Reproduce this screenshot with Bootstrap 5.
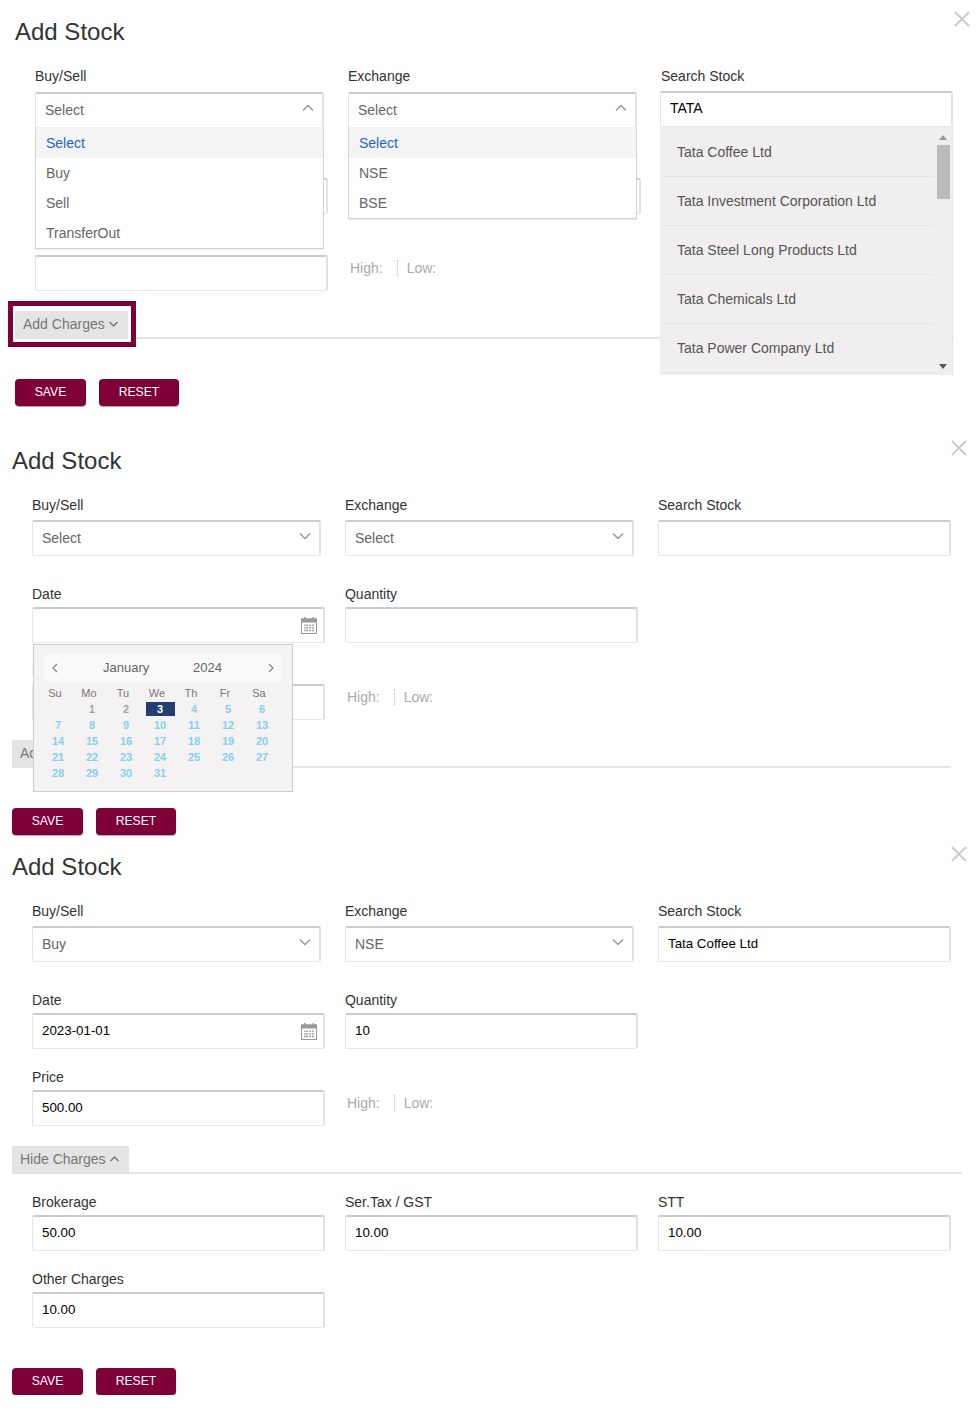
<!DOCTYPE html>
<html lang="en">
<head>
<meta charset="utf-8">
<title>Add Stock</title>
<link href="https://cdn.jsdelivr.net/npm/bootstrap@5.3.0/dist/css/bootstrap.min.css" rel="stylesheet">
<style>
body{background:#fff;font-family:"Liberation Sans",Arial,sans-serif;font-size:14px;color:#333;line-height:20px}
.sheet{position:relative;padding-left:12px}
.sheet-a{padding-left:15px;margin-top:17px}
.sheet-b{margin-top:40px}
.sheet-c{margin-top:17px}
.stock-title{font-size:24px;line-height:29px;font-weight:400;color:#333;margin:0 0 20px}
.close-x{position:absolute;top:-6px;right:11px;width:16px;height:16px;display:block}
.sheet-a .close-x{top:-6px;right:8px}
.stock-row{--bs-gutter-x:20px;--bs-gutter-y:0;margin-left:10px;margin-right:0;width:939px}
.gap-one{margin-bottom:28px}
.gap-two{margin-bottom:18px}
.gap-three{margin-bottom:20px}
.stock-label{display:block;font-size:14px;line-height:20px;color:#333;margin:0 0 3px}
.gap-one .stock-label{margin-bottom:5px}
.stock-input{height:36px;width:293px;padding:0 9px 2px;font-size:13.33px;color:#000;background:#fff;border:1px solid #e4e4e4;border-top:2px solid #ccc;border-right:2px solid #e2e2e2;border-bottom-color:#e8e8e8;border-radius:2px;box-shadow:none}
.stock-input.big-text{font-size:14px;padding-bottom:3px}
.pick{position:relative;height:36px;width:289px;display:flex;align-items:center;padding:0 0 2px 9px;font-size:14px;color:#666;background:#fff;border:1px solid #e4e4e4;border-top:2px solid #ccc;border-right:2px solid #e2e2e2;border-bottom-color:#e8e8e8;border-radius:2px}
.pick svg{position:absolute;right:8px;top:10px}
.pick-open{top:1px;z-index:6;border-bottom-color:#eee}
.pick-menu{position:absolute;top:33px;left:-1px;right:-2px;background:#fff;border:1px solid #d4d4d4;border-top:1px solid #eee;box-shadow:0 1px 1px #eee}
.pick-item{height:30px;line-height:30px;padding-left:10px;color:#666}
.pick-item.is-current{background:#f4f4f4;color:#1b66c9}
.search-box{position:relative;margin-left:-1px;width:293px}
.search-list{position:absolute;left:0;top:36px;width:293px;height:248px;z-index:5;background:#f0eeef;display:flex;border-right:1px solid #e4e4e4}
.search-items{width:275px;padding-top:1px}
.search-item{height:49px;line-height:49px;padding-left:17px;color:#555;border-bottom:1px solid #e6e4e5}
.search-rail{flex:1;display:flex;flex-direction:column;align-items:center;padding:8px 0 6px}
.rail-up{width:0;height:0;border:4px solid transparent;border-top:0;border-bottom:5px solid #999}
.rail-thumb{width:13px;height:54px;background:#bbb;margin-top:5px}
.rail-down{width:0;height:0;border:4px solid transparent;border-bottom:0;border-top:5px solid #555;margin-top:auto}
.date-box{position:relative;width:293px}
.cal-icon{position:absolute;right:8px;top:10px}
.quote{display:flex;align-items:center;padding:26px 0 0 2px;color:#aaa;line-height:20px}
.quote-sep{width:0;height:16px;border-left:1px dotted #bbb;margin:0 9px 0 14px}
.tab-line{display:flex;height:28px;border-bottom:2px solid #e5e5e5;margin-bottom:18px}
.sheet-a .tab-line,.sheet-b .tab-line{margin-bottom:0;width:939px}
.sheet-c .tab-line{width:950px}
.tab-btn{height:28px;display:flex;align-items:center;gap:4px;padding:0 10px 3px 8px;background:#e4e4e4;color:#777;font-size:14px;flex:none}
.mark-ring{position:relative;z-index:1;align-self:flex-start;margin:-10px -8px -8px -7px;padding:5px 3px 3px 2px;border:5px solid #7f0037;background:#fff}
.act-row{display:flex;gap:13px;margin-top:40px}
.act-btn{height:27px;padding:0;border:0;border-radius:4px;background:#7f0037;color:#fff;font-size:12.2px;line-height:25px;box-shadow:0 1px 1px rgba(0,0,0,.35)}
.act-btn:hover{background:#7f0037;color:#fff}
.act-save{width:71px}
.act-reset{width:80px}
.cal-pop{position:absolute;left:1px;top:37px;width:260px;height:148px;z-index:5;background:#f4f2f2;border:1px solid #ccc;padding:10px}
.cal-head{height:26px;background:#faf9f9;display:flex;align-items:center;font-size:13px;color:#666}
.cal-head svg{flex:none}
.cal-prev{margin-left:7px}
.cal-next{margin-left:auto;margin-right:7px}
.cal-month{margin-left:45px;width:90px}
.cal-grid{margin:4px 0 0 -3px;width:238px;table-layout:fixed;border-collapse:collapse;font-size:11px;line-height:16px;text-align:center}
.cal-grid th{font-weight:400;color:#777;padding:0 6px 0 0;height:16px}
.cal-grid td{padding:0;height:16px;font-weight:700;color:#84cfee}
.cal-grid td.was{color:#a5a5a5}
.cal-today{display:block;width:29px;height:14px;line-height:14px;margin:0 auto;background:#243f6f;color:#fff}
</style>
</head>
<body>

<!-- Panel 1 -->
<section class="sheet sheet-a">
  <svg class="close-x" viewBox="0 0 16 16"><path d="M1 1 15 15M15 1 1 15" stroke="#ccc" stroke-width="2" fill="none"/></svg>
  <h2 class="stock-title">Add Stock</h2>
  <div class="row stock-row gap-one">
    <div class="col-4">
      <label class="stock-label">Buy/Sell</label>
      <div class="pick pick-open">Select
        <svg width="12" height="8" viewBox="0 0 12 8"><path d="M1 6.5 6 1.5l5 5" stroke="#999" stroke-width="1.5" fill="none"/></svg>
        <div class="pick-menu">
          <div class="pick-item is-current">Select</div>
          <div class="pick-item">Buy</div>
          <div class="pick-item">Sell</div>
          <div class="pick-item">TransferOut</div>
        </div>
      </div>
    </div>
    <div class="col-4">
      <label class="stock-label">Exchange</label>
      <div class="pick pick-open">Select
        <svg width="12" height="8" viewBox="0 0 12 8"><path d="M1 6.5 6 1.5l5 5" stroke="#999" stroke-width="1.5" fill="none"/></svg>
        <div class="pick-menu">
          <div class="pick-item is-current">Select</div>
          <div class="pick-item">NSE</div>
          <div class="pick-item">BSE</div>
        </div>
      </div>
    </div>
    <div class="col-4">
      <label class="stock-label">Search Stock</label>
      <div class="search-box">
        <input class="form-control stock-input big-text" value="TATA">
        <div class="search-list">
          <div class="search-items">
            <div class="search-item">Tata Coffee Ltd</div>
            <div class="search-item">Tata Investment Corporation Ltd</div>
            <div class="search-item">Tata Steel Long Products Ltd</div>
            <div class="search-item">Tata Chemicals Ltd</div>
            <div class="search-item">Tata Power Company Ltd</div>
          </div>
          <div class="search-rail"><span class="rail-up"></span><span class="rail-thumb"></span><span class="rail-down"></span></div>
        </div>
      </div>
    </div>
  </div>
  <div class="row stock-row gap-two">
    <div class="col-4">
      <label class="stock-label">Date</label>
      <input class="form-control stock-input">
    </div>
    <div class="col-4">
      <label class="stock-label">Quantity</label>
      <input class="form-control stock-input">
    </div>
  </div>
  <div class="row stock-row gap-three">
    <div class="col-4">
      <label class="stock-label">Price</label>
      <input class="form-control stock-input">
    </div>
    <div class="col-4">
      <div class="quote"><span>High:</span><span class="quote-sep"></span><span>Low:</span></div>
    </div>
  </div>
  <div class="tab-line">
    <div class="mark-ring">
      <div class="tab-btn">Add Charges
        <svg width="9" height="6" viewBox="0 0 9 6"><path d="M.5 1 4.5 5l4-4" stroke="#666" stroke-width="1.2" fill="none"/></svg>
      </div>
    </div>
  </div>
  <div class="act-row">
    <button class="btn act-btn act-save" type="button">SAVE</button>
    <button class="btn act-btn act-reset" type="button">RESET</button>
  </div>
</section>

<!-- Panel 2 -->
<section class="sheet sheet-b">
  <svg class="close-x" viewBox="0 0 16 16"><path d="M1 1 15 15M15 1 1 15" stroke="#ccc" stroke-width="2" fill="none"/></svg>
  <h2 class="stock-title">Add Stock</h2>
  <div class="row stock-row gap-one">
    <div class="col-4">
      <label class="stock-label">Buy/Sell</label>
      <div class="pick">Select
        <svg width="12" height="8" viewBox="0 0 12 8"><path d="M1 1.5l5 5 5-5" stroke="#999" stroke-width="1.5" fill="none"/></svg>
      </div>
    </div>
    <div class="col-4">
      <label class="stock-label">Exchange</label>
      <div class="pick">Select
        <svg width="12" height="8" viewBox="0 0 12 8"><path d="M1 1.5l5 5 5-5" stroke="#999" stroke-width="1.5" fill="none"/></svg>
      </div>
    </div>
    <div class="col-4">
      <label class="stock-label">Search Stock</label>
      <input class="form-control stock-input">
    </div>
  </div>
  <div class="row stock-row gap-two">
    <div class="col-4">
      <label class="stock-label">Date</label>
      <div class="date-box">
        <input class="form-control stock-input">
        <svg class="cal-icon" width="16" height="17" viewBox="0 0 16 17"><rect x=".5" y="2" width="15" height="14.5" fill="#fff" stroke="#999"/><rect x="0" y="1.5" width="16" height="4" fill="#999"/><rect x="3" y="0" width="1.5" height="2" fill="#999"/><rect x="11.5" y="0" width="1.5" height="2" fill="#999"/><path d="M3 7.5h1.7v1.6H3zM5 7.5h2v1.6H5zM8 7.5h2v1.6H8zM11 7.5h2v1.6h-2zM3 10h1.7v1.6H3zM5 10h2v1.6H5zM8 10h2v1.6H8zM11 10h2v1.6h-2zM3 12.6h1.7v1.6H3zM5 12.6h2v1.6H5zM8 12.6h2v1.6H8zM11 12.6h2v1.6h-2z" fill="#aaa"/></svg>
        <div class="cal-pop">
          <div class="cal-head">
            <svg class="cal-prev" width="7" height="10" viewBox="0 0 7 10"><path d="M6 1 2 5l4 4" stroke="#888" stroke-width="1.2" fill="none"/></svg>
            <span class="cal-month">January</span>
            <span>2024</span>
            <svg class="cal-next" width="7" height="10" viewBox="0 0 7 10"><path d="M1 1l4 4-4 4" stroke="#888" stroke-width="1.2" fill="none"/></svg>
          </div>
          <table class="cal-grid">
            <thead><tr><th>Su</th><th>Mo</th><th>Tu</th><th>We</th><th>Th</th><th>Fr</th><th>Sa</th></tr></thead>
            <tbody>
              <tr><td></td><td class="was">1</td><td class="was">2</td><td><span class="cal-today">3</span></td><td>4</td><td>5</td><td>6</td></tr>
              <tr><td>7</td><td>8</td><td>9</td><td>10</td><td>11</td><td>12</td><td>13</td></tr>
              <tr><td>14</td><td>15</td><td>16</td><td>17</td><td>18</td><td>19</td><td>20</td></tr>
              <tr><td>21</td><td>22</td><td>23</td><td>24</td><td>25</td><td>26</td><td>27</td></tr>
              <tr><td>28</td><td>29</td><td>30</td><td>31</td><td></td><td></td><td></td></tr>
            </tbody>
          </table>
        </div>
      </div>
    </div>
    <div class="col-4">
      <label class="stock-label">Quantity</label>
      <input class="form-control stock-input">
    </div>
  </div>
  <div class="row stock-row gap-three">
    <div class="col-4">
      <label class="stock-label">Price</label>
      <input class="form-control stock-input">
    </div>
    <div class="col-4">
      <div class="quote"><span>High:</span><span class="quote-sep"></span><span>Low:</span></div>
    </div>
  </div>
  <div class="tab-line">
    <div class="tab-btn">Add Charges
      <svg width="9" height="6" viewBox="0 0 9 6"><path d="M.5 1 4.5 5l4-4" stroke="#666" stroke-width="1.2" fill="none"/></svg>
    </div>
  </div>
  <div class="act-row">
    <button class="btn act-btn act-save" type="button">SAVE</button>
    <button class="btn act-btn act-reset" type="button">RESET</button>
  </div>
</section>

<!-- Panel 3 -->
<section class="sheet sheet-c">
  <svg class="close-x" viewBox="0 0 16 16"><path d="M1 1 15 15M15 1 1 15" stroke="#ccc" stroke-width="2" fill="none"/></svg>
  <h2 class="stock-title">Add Stock</h2>
  <div class="row stock-row gap-one">
    <div class="col-4">
      <label class="stock-label">Buy/Sell</label>
      <div class="pick">Buy
        <svg width="12" height="8" viewBox="0 0 12 8"><path d="M1 1.5l5 5 5-5" stroke="#999" stroke-width="1.5" fill="none"/></svg>
      </div>
    </div>
    <div class="col-4">
      <label class="stock-label">Exchange</label>
      <div class="pick">NSE
        <svg width="12" height="8" viewBox="0 0 12 8"><path d="M1 1.5l5 5 5-5" stroke="#999" stroke-width="1.5" fill="none"/></svg>
      </div>
    </div>
    <div class="col-4">
      <label class="stock-label">Search Stock</label>
      <input class="form-control stock-input" value="Tata Coffee Ltd">
    </div>
  </div>
  <div class="row stock-row gap-two">
    <div class="col-4">
      <label class="stock-label">Date</label>
      <div class="date-box">
        <input class="form-control stock-input" value="2023-01-01">
        <svg class="cal-icon" width="16" height="17" viewBox="0 0 16 17"><rect x=".5" y="2" width="15" height="14.5" fill="#fff" stroke="#999"/><rect x="0" y="1.5" width="16" height="4" fill="#999"/><rect x="3" y="0" width="1.5" height="2" fill="#999"/><rect x="11.5" y="0" width="1.5" height="2" fill="#999"/><path d="M3 7.5h1.7v1.6H3zM5 7.5h2v1.6H5zM8 7.5h2v1.6H8zM11 7.5h2v1.6h-2zM3 10h1.7v1.6H3zM5 10h2v1.6H5zM8 10h2v1.6H8zM11 10h2v1.6h-2zM3 12.6h1.7v1.6H3zM5 12.6h2v1.6H5zM8 12.6h2v1.6H8zM11 12.6h2v1.6h-2z" fill="#aaa"/></svg>
      </div>
    </div>
    <div class="col-4">
      <label class="stock-label">Quantity</label>
      <input class="form-control stock-input" value="10">
    </div>
  </div>
  <div class="row stock-row gap-three">
    <div class="col-4">
      <label class="stock-label">Price</label>
      <input class="form-control stock-input" value="500.00">
    </div>
    <div class="col-4">
      <div class="quote"><span>High:</span><span class="quote-sep"></span><span>Low:</span></div>
    </div>
  </div>
  <div class="tab-line">
    <div class="tab-btn">Hide Charges
      <svg width="9" height="6" viewBox="0 0 9 6"><path d="M.5 5 4.5 1l4 4" stroke="#666" stroke-width="1.2" fill="none"/></svg>
    </div>
  </div>
  <div class="row stock-row gap-two">
    <div class="col-4">
      <label class="stock-label">Brokerage</label>
      <input class="form-control stock-input" value="50.00">
    </div>
    <div class="col-4">
      <label class="stock-label">Ser.Tax / GST</label>
      <input class="form-control stock-input" value="10.00">
    </div>
    <div class="col-4">
      <label class="stock-label">STT</label>
      <input class="form-control stock-input" value="10.00">
    </div>
  </div>
  <div class="row stock-row">
    <div class="col-4">
      <label class="stock-label">Other Charges</label>
      <input class="form-control stock-input" value="10.00">
    </div>
  </div>
  <div class="act-row">
    <button class="btn act-btn act-save" type="button">SAVE</button>
    <button class="btn act-btn act-reset" type="button">RESET</button>
  </div>
</section>

<script src="https://cdn.jsdelivr.net/npm/bootstrap@5.3.0/dist/js/bootstrap.bundle.min.js"></script>
</body>
</html>
